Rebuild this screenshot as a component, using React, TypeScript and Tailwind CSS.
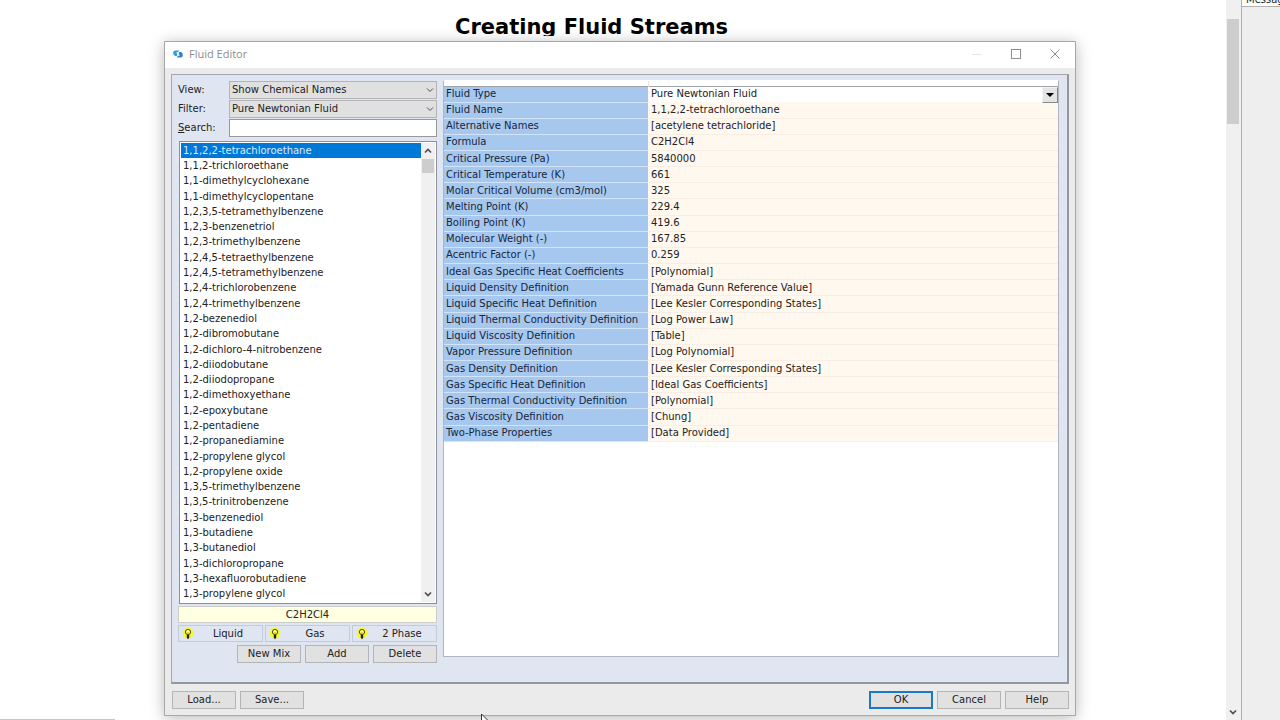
import React, { useState } from 'react';

const fluids = [
  '1,1,2,2-tetrachloroethane',
  '1,1,2-trichloroethane',
  '1,1-dimethylcyclohexane',
  '1,1-dimethylcyclopentane',
  '1,2,3,5-tetramethylbenzene',
  '1,2,3-benzenetriol',
  '1,2,3-trimethylbenzene',
  '1,2,4,5-tetraethylbenzene',
  '1,2,4,5-tetramethylbenzene',
  '1,2,4-trichlorobenzene',
  '1,2,4-trimethylbenzene',
  '1,2-bezenediol',
  '1,2-dibromobutane',
  '1,2-dichloro-4-nitrobenzene',
  '1,2-diiodobutane',
  '1,2-diiodopropane',
  '1,2-dimethoxyethane',
  '1,2-epoxybutane',
  '1,2-pentadiene',
  '1,2-propanediamine',
  '1,2-propylene glycol',
  '1,2-propylene oxide',
  '1,3,5-trimethylbenzene',
  '1,3,5-trinitrobenzene',
  '1,3-benzenediol',
  '1,3-butadiene',
  '1,3-butanediol',
  '1,3-dichloropropane',
  '1,3-hexafluorobutadiene',
  '1,3-propylene glycol',
];

const properties: [string, string][] = [
  ['Fluid Name', '1,1,2,2-tetrachloroethane'],
  ['Alternative Names', '[acetylene tetrachloride]'],
  ['Formula', 'C2H2Cl4'],
  ['Critical Pressure (Pa)', '5840000'],
  ['Critical Temperature (K)', '661'],
  ['Molar Critical Volume (cm3/mol)', '325'],
  ['Melting Point (K)', '229.4'],
  ['Boiling Point (K)', '419.6'],
  ['Molecular Weight (-)', '167.85'],
  ['Acentric Factor (-)', '0.259'],
  ['Ideal Gas Specific Heat Coefficients', '[Polynomial]'],
  ['Liquid Density Definition', '[Yamada Gunn Reference Value]'],
  ['Liquid Specific Heat Definition', '[Lee Kesler Corresponding States]'],
  ['Liquid Thermal Conductivity Definition', '[Log Power Law]'],
  ['Liquid Viscosity Definition', '[Table]'],
  ['Vapor Pressure Definition', '[Log Polynomial]'],
  ['Gas Density Definition', '[Lee Kesler Corresponding States]'],
  ['Gas Specific Heat Definition', '[Ideal Gas Coefficients]'],
  ['Gas Thermal Conductivity Definition', '[Polynomial]'],
  ['Gas Viscosity Definition', '[Chung]'],
  ['Two-Phase Properties', '[Data Provided]'],
];

const Chevron: React.FC<{ up?: boolean; bold?: boolean }> = ({ up, bold }) => (
  <svg
    className="w-2 h-2 text-[#505050]"
    viewBox="0 0 8 8"
    fill="none"
    stroke="currentColor"
    strokeWidth={bold ? 1.7 : 1}
  >
    <path d={up ? 'M1 5.5 4 2.5 7 5.5' : 'M1 2.5 4 5.5 7 2.5'} />
  </svg>
);

const BulbIcon = () => (
  <svg className="w-3 h-[13px] shrink-0" viewBox="0 0 12 13">
    <ellipse cx="6" cy="6" rx="5.3" ry="5.6" fill="#f7f72c" />
    <circle cx="6" cy="5" r="2.6" fill="#ffff70" stroke="#4a4a10" strokeWidth="1" />
    <path d="M6 5v3" stroke="#8a8a20" strokeWidth="0.6" />
    <path d="M4.8 7.800h2.400v3L6 12.200 4.800 10.800z" fill="#202020" />
  </svg>
);

const AppIcon = () => (
  <svg className="w-[10px] h-[10px]" viewBox="0 0 10 10">
    <path d="M.2 3.800C.2 2.300 1.200 1.500 2.700 1.500H6.300L5 3.300H3.400L4.400 5.900 3.600 6.900H2.500C1 6.900.2 5.600.2 3.800z" fill="#2f9fe4" />
    <path d="M9.800 6.200C9.800 7.700 8.800 8.500 7.300 8.500H3.700L5 6.700H6.600L5.600 4.100 6.400 3.100H7.500C9 3.100 9.800 4.400 9.800 6.200z" fill="#2a86d2" />
  </svg>
);

interface ComboProps {
  id: string;
  label: string;
  value: string;
}

const Combo: React.FC<ComboProps> = ({ id, label, value }) => (
  <div className="flex items-center">
    <label htmlFor={id} className="w-[51px]">{label}</label>
    <div className="relative flex-1">
      <select
        id={id}
        className="block w-full h-[18px] pl-[2px] appearance-none bg-[#e0e0e0] border border-[#b4b4b8]"
      >
        <option>{value}</option>
      </select>
      <span className="absolute right-[3px] top-[5px] pointer-events-none">
        <Chevron />
      </span>
    </div>
  </div>
);

const PushButton: React.FC<{ label: string; primary?: boolean }> = ({ label, primary }) => (
  <button
    className={
      'w-16 h-[18px] flex items-center justify-center bg-[#e1e1e1] ' +
      (primary ? 'border-2 border-[#1a78c8]' : 'border border-[#b4b4b4]')
    }
  >
    {label}
  </button>
);

const FluidList = () => {
  const [selected, setSelected] = useState(fluids[0]);

  return (
    <div className="flex flex-1 min-h-0 ml-px mt-1 p-px bg-white border border-[#8a909c]">
      <ul className="flex flex-col flex-1 min-w-0">
        {fluids.map((name) => (
          <li key={name} className="flex flex-1 min-h-0">
            <button
              onClick={() => setSelected(name)}
              className={
                'flex items-center w-full pl-[2px] leading-3 text-left whitespace-nowrap ' +
                (name === selected ? 'bg-[#0078d7] text-[#d8ecfc]' : '')
              }
            >
              {name}
            </button>
          </li>
        ))}
      </ul>
      <div className="flex flex-col items-center w-[14px] bg-[#f0f0f0]">
        <span className="py-1"><Chevron up bold /></span>
        <div className="w-3 h-[14px] bg-[#cdcdcd]" />
        <span className="mt-auto py-1"><Chevron bold /></span>
      </div>
    </div>
  );
};

const PropertyGrid = () => (
  <div className="flex-1 min-w-0 bg-white border border-[#b0b5c0] border-t-white">
    <table className="w-full h-[361px] border-collapse table-fixed">
      <colgroup>
        <col className="w-[204px]" />
        <col />
      </colgroup>
      <thead>
        <tr className="h-[5px] border-b border-[#a0a4aa]">
          <th className="p-0 border-r border-[#e4e4e4]" />
          <th className="p-0" />
        </tr>
      </thead>
      <tbody>
        <tr className="h-4">
          <th className="p-0 pl-[2px] text-left font-normal bg-[#a6c7ee] text-[#16263c] border-b border-[#d4e4f8]">
            <label htmlFor="fluid-type">Fluid Type</label>
          </th>
          <td className="relative p-0">
            <select
              id="fluid-type"
              className="block w-full h-[14px] pl-[3px] appearance-none bg-white"
            >
              <option>Pure Newtonian Fluid</option>
            </select>
            <span className="absolute right-0 top-0 w-4 h-4 flex items-center justify-center bg-[#e4e4e4] border border-[#f4f4f4] border-r-[#888888] border-b-[#888888] pointer-events-none">
              <svg className="w-2 h-1" viewBox="0 0 8 4">
                <path d="M0 0h8L4 4z" fill="#000000" />
              </svg>
            </span>
          </td>
        </tr>
        {properties.map(([name, value]) => (
          <tr key={name}>
            <th className="p-0 pl-[2px] text-left font-normal whitespace-nowrap bg-[#a6c7ee] text-[#16263c] border-b border-[#d4e4f8]">
              {name}
            </th>
            <td className="p-0 pl-[3px] whitespace-nowrap bg-[#fff8ef] border-b border-[#f8eee6]">{value}</td>
          </tr>
        ))}
      </tbody>
    </table>
  </div>
);

const FluidEditor = () => (
  <section className="absolute left-[164px] right-[165px] top-[41px] bottom-[4px] flex flex-col bg-[#ebebeb] border border-[#a8a8a8] shadow-[0_2px_14px_rgba(0,0,0,0.28)]">
    <header className="flex items-center h-6 pl-2 pr-[15px] bg-white text-[#8c8c8c]">
      <AppIcon />
      <h2 className="ml-[6px] font-['Open_Sans',sans-serif] text-[11px]">Fluid Editor</h2>
      <div className="flex items-center gap-[29px] ml-auto">
        <button aria-label="Minimize" className="w-[10px] h-px bg-[#e6e6e6]" />
        <button aria-label="Maximize" className="w-[10px] h-[10px] border border-[#8c8c8c]" />
        <button aria-label="Close">
          <svg className="w-[10px] h-[10px]" viewBox="0 0 10 10" stroke="#8c8c8c">
            <path d="M.5.5l9 9M9.500.5l-9 9" />
          </svg>
        </button>
      </div>
    </header>

    <div className="flex flex-1 min-h-0 border-t-2 border-white pt-[6px] px-[6px]">
      <div className="flex flex-1 min-w-0 gap-[6px] pt-[5px] pl-[6px] pr-2 pb-[19px] bg-[#dfe5f1] border border-[#a4a8b4] border-r-2 border-b-2 border-r-[#94989e] border-b-[#94989e]">
        <div className="flex flex-col w-[259px] pt-px">
          <div className="flex flex-col gap-px">
            <Combo id="view" label="View:" value="Show Chemical Names" />
            <Combo id="filter" label="Filter:" value="Pure Newtonian Fluid" />
            <div className="flex items-center">
              <label htmlFor="search" className="w-[51px]"><u>S</u>earch:</label>
              <input id="search" className="flex-1 min-w-0 h-[18px] px-1 bg-white border border-[#96989c]" />
            </div>
          </div>
          <FluidList />
          <div className="mt-[2px] h-[17px] flex items-center justify-center bg-[#ffffe1] border border-[#ccccc8]">
            C2H2Cl4
          </div>
          <div className="grid grid-cols-3 gap-[2px] mt-[2px]">
            {['Liquid', 'Gas', '2 Phase'].map((phase) => (
              <button key={phase} className="flex items-center h-[17px] pl-[3px] border border-[#c3cad8]">
                <BulbIcon />
                <span className="flex-1 text-center">{phase}</span>
              </button>
            ))}
          </div>
          <div className="flex justify-end gap-1 mt-[3px]">
            <PushButton label="New Mix" />
            <PushButton label="Add" />
            <PushButton label="Delete" />
          </div>
        </div>
        <div className="flex flex-1 min-w-0 pb-[6px]">
          <PropertyGrid />
        </div>
      </div>
    </div>

    <footer className="flex justify-between pl-[7px] pr-[6px] pt-[7px] pb-[6px]">
      <div className="flex gap-1">
        <PushButton label="Load..." />
        <PushButton label="Save..." />
      </div>
      <div className="flex gap-1">
        <PushButton label="OK" primary />
        <PushButton label="Cancel" />
        <PushButton label="Help" />
      </div>
    </footer>
  </section>
);

const App = () => (
  <div className="flex h-screen overflow-hidden bg-white font-['DejaVu_Sans',sans-serif] text-[10px] leading-3 text-[#222222]">
    <main className="relative flex-1 min-w-0">
      <div className="flex h-full">
        <h1 className="flex-1 h-9 overflow-hidden pt-3 pr-[43px] text-center text-[21px] leading-[30px] font-bold text-black">
          Creating Fluid Streams
        </h1>
        <div className="flex flex-col items-center w-[15px] pr-[2px] bg-[#f0f0f0]">
          <div className="w-3 h-[105px] mt-[19px] bg-[#cdcdcd]" />
          <span className="mt-auto pb-1"><Chevron bold /></span>
        </div>
      </div>
      <FluidEditor />
      <div className="absolute left-0 bottom-0 w-[115px] h-px bg-[#c8c8c8]" />
      <svg className="absolute left-[481px] bottom-0 w-2 h-[6px]" viewBox="0 0 8 6">
        <path d="M.5 0v8h8z" fill="#ffffff" stroke="#333333" />
      </svg>
    </main>
    <aside className="w-[39px] bg-[#eeeeee] border-l border-[#b0b0b0] overflow-hidden">
      <div className="flex items-end h-[7px] pl-1 bg-white border-b border-[#b0b0b0] overflow-hidden">
        <span>Messages</span>
      </div>
    </aside>
  </div>
);

export default App;
